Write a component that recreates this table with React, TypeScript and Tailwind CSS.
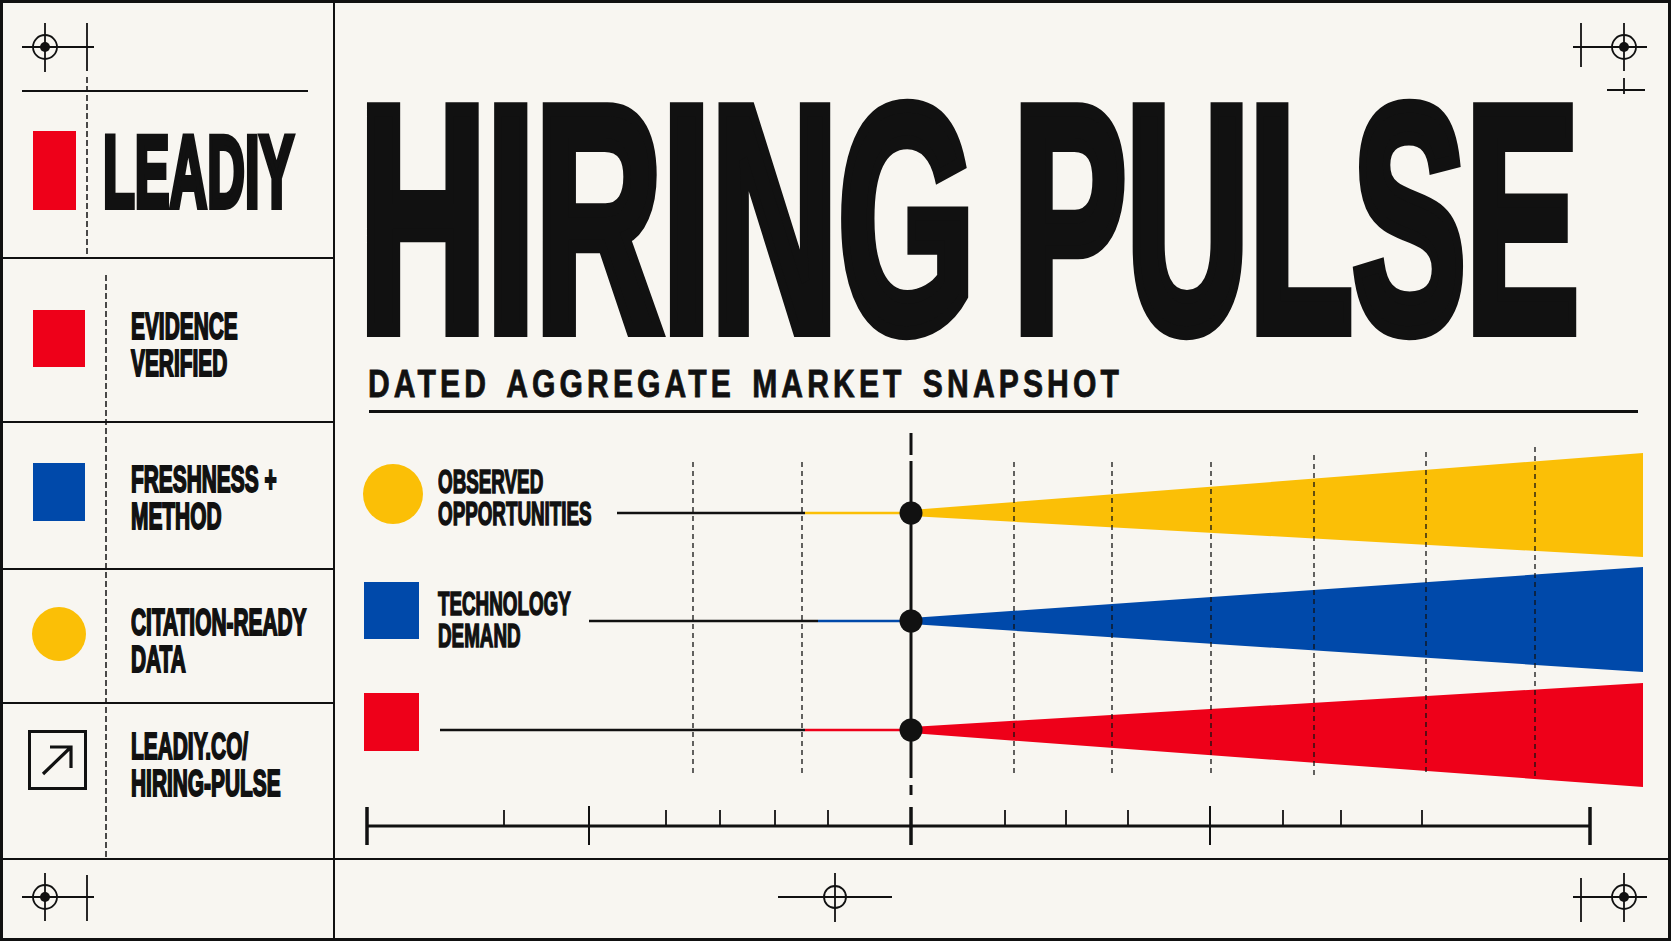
import React from 'react';

// colours picked off the poster
const INK = '#111111';

function LeftLabel({ lines }: { lines: string[] }) {
  return (
    <div className="w-max origin-left scale-x-[0.58] whitespace-nowrap text-[36px] leading-[37px] font-bold [-webkit-text-stroke:2px_#111111]">
      {lines.map((l, i) => (
        <div key={i}>{l}</div>
      ))}
    </div>
  );
}

function ChartLabel({ lines }: { lines: string[] }) {
  return (
    <div className="w-max origin-left scale-x-[0.57] whitespace-nowrap text-[33px] leading-[32px] font-bold [-webkit-text-stroke:1.6px_#111111]">
      {lines.map((l, i) => (
        <div key={i}>{l}</div>
      ))}
    </div>
  );
}

function LeftDecor() {
  return (
    <svg className="absolute inset-0 w-full h-full" viewBox="3 3 330 855" fill="none">
      <circle cx="45" cy="47" r="12" stroke={INK} strokeWidth="1.8" />
      <circle cx="45" cy="47" r="5" fill={INK} />
      <line x1="22" y1="47" x2="94" y2="47" stroke={INK} strokeWidth="1.8" />
      <line x1="45" y1="23" x2="45" y2="72" stroke={INK} strokeWidth="1.8" />
      <line x1="87" y1="23" x2="87" y2="71" stroke={INK} strokeWidth="1.8" />
      <line x1="87" y1="77" x2="87" y2="257" stroke={INK} strokeWidth="1.5" strokeDasharray="6 3" />
      <line x1="22" y1="91" x2="308" y2="91" stroke={INK} strokeWidth="2" />
      <line x1="106" y1="275" x2="106" y2="858" stroke={INK} strokeWidth="1.5" strokeDasharray="6 3" />
    </svg>
  );
}

function Chart() {
  const grid: [number, number][] = [
    [693, 462], [802, 462], [1014, 462], [1112, 462], [1211, 462], [1314, 455], [1426, 452], [1535, 447],
  ];
  const small = [504, 666, 720, 775, 828, 1005, 1066, 1128, 1283, 1341, 1422];
  return (
    <svg className="absolute inset-0 w-full h-full" viewBox="335 3 1333 855" fill="none">
      {/* wedges */}
      <polygon points="911,510 1643,453 1643,557 911,516" fill="#fbbf06" />
      <polygon points="911,618 1643,567 1643,672 911,624" fill="#0049aa" />
      <polygon points="911,727 1643,683 1643,787 911,733" fill="#ee0019" />

      {grid.map(([x, y]) => (
        <line key={x} x1={x} y1={y} x2={x} y2="776" stroke={INK} strokeWidth="1.3" strokeDasharray="5 4" />
      ))}

      {/* series leaders */}
      <line x1="617" y1="513" x2="805" y2="513" stroke={INK} strokeWidth="2.5" />
      <line x1="805" y1="513" x2="911" y2="513" stroke="#fbbf06" strokeWidth="2.5" />
      <line x1="589" y1="621" x2="818" y2="621" stroke={INK} strokeWidth="2.5" />
      <line x1="818" y1="621" x2="911" y2="621" stroke="#0049aa" strokeWidth="2.5" />
      <line x1="440" y1="730" x2="805" y2="730" stroke={INK} strokeWidth="2.5" />
      <line x1="805" y1="730" x2="911" y2="730" stroke="#ee0019" strokeWidth="2.5" />

      {/* centre axis */}
      <line x1="911" y1="433" x2="911" y2="455" stroke={INK} strokeWidth="3" />
      <line x1="911" y1="461" x2="911" y2="778" stroke={INK} strokeWidth="3" />
      <line x1="911" y1="785" x2="911" y2="795" stroke={INK} strokeWidth="3" />
      <circle cx="911" cy="513" r="11.5" fill={INK} />
      <circle cx="911" cy="621" r="11.5" fill={INK} />
      <circle cx="911" cy="730" r="11.5" fill={INK} />

      {/* time axis */}
      <line x1="367" y1="826" x2="1590" y2="826" stroke={INK} strokeWidth="3" />
      <line x1="367" y1="807" x2="367" y2="845" stroke={INK} strokeWidth="3.5" />
      <line x1="911" y1="807" x2="911" y2="845" stroke={INK} strokeWidth="3.5" />
      <line x1="1590" y1="807" x2="1590" y2="845" stroke={INK} strokeWidth="3.5" />
      <line x1="589" y1="806" x2="589" y2="845" stroke={INK} strokeWidth="2" />
      <line x1="1210" y1="806" x2="1210" y2="845" stroke={INK} strokeWidth="2" />
      {small.map(x => (
        <line key={x} x1={x} y1="810" x2={x} y2="826" stroke={INK} strokeWidth="1.8" />
      ))}

      {/* registration mark top right */}
      <circle cx="1624" cy="47" r="12" stroke={INK} strokeWidth="1.8" />
      <circle cx="1624" cy="47" r="5" fill={INK} />
      <line x1="1573" y1="47" x2="1647" y2="47" stroke={INK} strokeWidth="1.8" />
      <line x1="1624" y1="23" x2="1624" y2="71" stroke={INK} strokeWidth="1.8" />
      <line x1="1581" y1="23" x2="1581" y2="67" stroke={INK} strokeWidth="1.8" />
      <line x1="1607" y1="90" x2="1645" y2="90" stroke={INK} strokeWidth="1.8" />
      <line x1="1624" y1="78" x2="1624" y2="94" stroke={INK} strokeWidth="1.8" />
    </svg>
  );
}

export default function App() {
  return (
    <div className="w-[1671px] h-[941px] overflow-hidden bg-[#f8f6f1] border-[3px] border-[#111111] grid grid-cols-[332px_1fr] grid-rows-[857px_1fr] font-['Liberation_Sans',Arial,sans-serif] text-[#111111]">
      {/* left column */}
      <div className="relative overflow-hidden border-r-2 border-b-2 border-[#111111] flex flex-col">
        <div className="h-[256px] shrink-0 border-b-2 border-[#111111] pt-[128px] pl-[30px] flex items-start">
          <div className="w-[43px] h-[79px] shrink-0 bg-[#ee0019]" />
          <div className="ml-[27px] mt-[1px] shrink-0 w-max origin-left scale-x-[0.511] whitespace-nowrap text-[102px] leading-[80px] font-bold [-webkit-text-stroke:6px_#111111]">
            LEADIY
          </div>
        </div>
        <div className="h-[164px] shrink-0 border-b-2 border-[#111111] pt-[49px] pl-[30px] flex items-start">
          <div className="w-[98px] shrink-0">
            <div className="mt-[2px] w-[52px] h-[57px] bg-[#ee0019]" />
          </div>
          <LeftLabel lines={['EVIDENCE', 'VERIFIED']} />
        </div>
        <div className="h-[147px] shrink-0 border-b-2 border-[#111111] pt-[38px] pl-[30px] flex items-start">
          <div className="w-[98px] shrink-0">
            <div className="mt-[2px] w-[52px] h-[58px] bg-[#0049aa]" />
          </div>
          <LeftLabel lines={['FRESHNESS +', 'METHOD']} />
        </div>
        <div className="h-[134px] shrink-0 border-b-2 border-[#111111] pt-[34px] pl-[30px] flex items-start">
          <div className="w-[98px] shrink-0">
            <div className="mt-[3px] -ml-px w-[54px] h-[54px] rounded-full bg-[#fbbf06]" />
          </div>
          <LeftLabel lines={['CITATION-READY', 'DATA']} />
        </div>
        <div className="flex-1 pt-[24px] pl-[30px] flex items-start">
          <div className="w-[98px] shrink-0">
            <div className="mt-[2px] -ml-[5px] w-[59px] h-[60px] border-[3px] border-[#111111]">
              <svg width="53" height="54" viewBox="0 0 53 54" fill="none">
                <path d="M12 41 L40 14 M19 14 H40 V35" stroke={INK} strokeWidth="3.2" />
              </svg>
            </div>
          </div>
          <LeftLabel lines={['LEADIY.CO/', 'HIRING-PULSE']} />
        </div>
        <LeftDecor />
      </div>

      {/* main column */}
      <div className="relative overflow-hidden border-b-2 border-[#111111]">
        <Chart />
        <div className="relative flex flex-col">
          <div className="mt-[94px] pl-[24px] h-[244px] flex text-[321px] leading-[244px] font-bold tracking-[-1px] [-webkit-text-stroke:14px_#111111]">
            <div className="w-[654px] shrink-0">
              <div className="w-max origin-left scale-x-[0.551] whitespace-nowrap">HIRING</div>
            </div>
            <div className="shrink-0">
              <div className="w-max origin-left scale-x-[0.531] whitespace-nowrap">PULSE</div>
            </div>
          </div>
          <div className="mt-[24px] pl-[33px] h-[38px]">
            <div className="w-max origin-left scale-x-[0.792] whitespace-nowrap text-[38px] leading-[38px] font-bold tracking-[5.2px] [word-spacing:6px] [-webkit-text-stroke:0.8px_#111111]">
              DATED AGGREGATE MARKET SNAPSHOT
            </div>
          </div>
          <div className="mt-[7px] ml-[34px] w-[1269px] h-[3px] bg-[#111111]" />

          <div className="mt-[51px] pl-[28px] flex items-start">
            <div className="w-[60px] shrink-0">
              <div className="w-[60px] h-[60px] rounded-full bg-[#fbbf06]" />
            </div>
            <div className="ml-[15px] mt-[2px]">
              <ChartLabel lines={['OBSERVED', 'OPPORTUNITIES']} />
            </div>
          </div>
          <div className="mt-[52px] pl-[28px] flex items-start">
            <div className="w-[60px] shrink-0">
              <div className="ml-px w-[55px] h-[57px] bg-[#0049aa]" />
            </div>
            <div className="ml-[15px] mt-[6px]">
              <ChartLabel lines={['TECHNOLOGY', 'DEMAND']} />
            </div>
          </div>
          <div className="mt-[41px] pl-[28px] flex items-start">
            <div className="w-[60px] shrink-0">
              <div className="ml-px w-[55px] h-[58px] bg-[#ee0019]" />
            </div>
          </div>
        </div>
      </div>

      {/* bottom strip */}
      <div className="relative border-r-2 border-[#111111]">
        <svg className="absolute inset-0 w-full h-full" viewBox="3 860 330 78" fill="none">
          <circle cx="45" cy="897" r="12" stroke={INK} strokeWidth="1.8" />
          <circle cx="45" cy="897" r="5" fill={INK} />
          <line x1="22" y1="897" x2="94" y2="897" stroke={INK} strokeWidth="1.8" />
          <line x1="45" y1="873" x2="45" y2="921" stroke={INK} strokeWidth="1.8" />
          <line x1="87" y1="875" x2="87" y2="921" stroke={INK} strokeWidth="1.8" />
        </svg>
      </div>
      <div className="relative">
        <svg className="absolute inset-0 w-full h-full" viewBox="335 860 1333 78" fill="none">
          <circle cx="835" cy="897" r="11" stroke={INK} strokeWidth="1.8" />
          <line x1="778" y1="897" x2="892" y2="897" stroke={INK} strokeWidth="1.8" />
          <line x1="835" y1="873" x2="835" y2="922" stroke={INK} strokeWidth="1.8" />
          <circle cx="1624" cy="897" r="12" stroke={INK} strokeWidth="1.8" />
          <circle cx="1624" cy="897" r="5" fill={INK} />
          <line x1="1573" y1="897" x2="1647" y2="897" stroke={INK} strokeWidth="1.8" />
          <line x1="1624" y1="873" x2="1624" y2="922" stroke={INK} strokeWidth="1.8" />
          <line x1="1581" y1="878" x2="1581" y2="922" stroke={INK} strokeWidth="1.8" />
        </svg>
      </div>
    </div>
  );
}
